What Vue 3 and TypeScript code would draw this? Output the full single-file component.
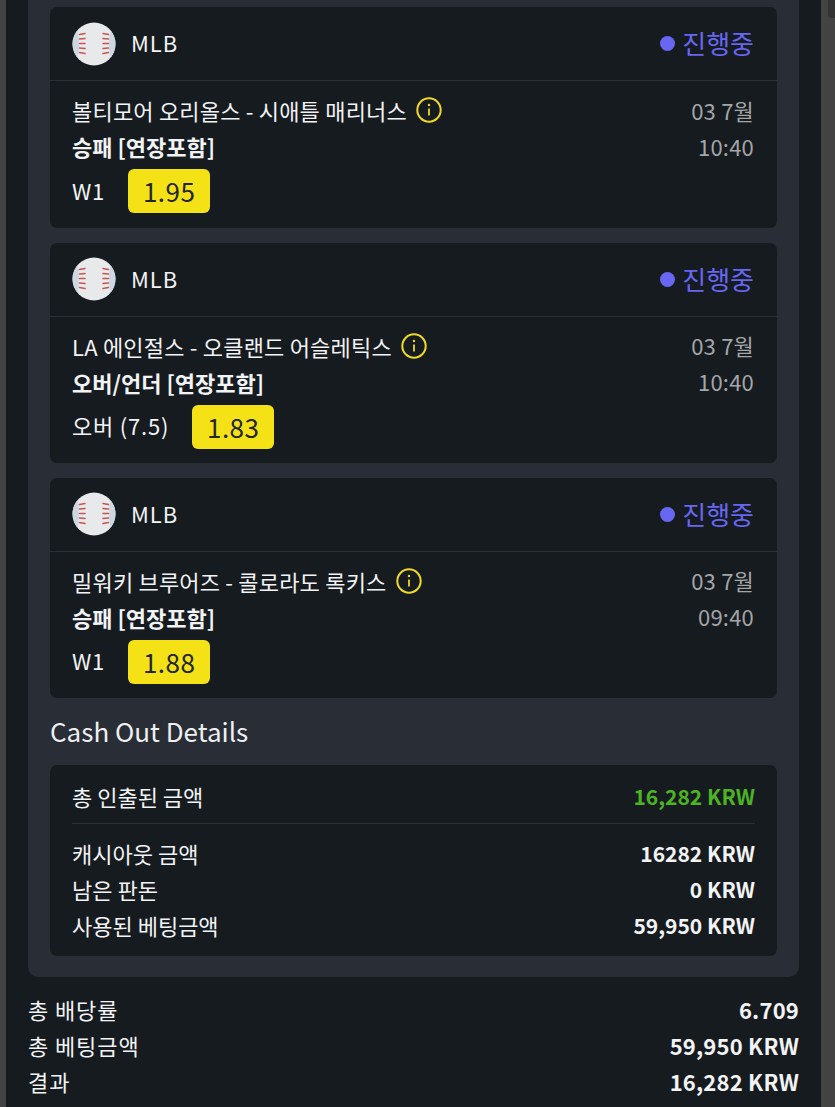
<script setup lang="ts">
interface Bet {
  match: string
  market: string
  pick: string
  odds: string
  date: string
  time: string
}

const bets: Bet[] = [
  { match: '볼티모어 오리올스 - 시애틀 매리너스', market: '승패 [연장포함]', pick: 'W1', odds: '1.95', date: '03 7월', time: '10:40' },
  { match: 'LA 에인절스 - 오클랜드 어슬레틱스', market: '오버/언더 [연장포함]', pick: '오버 (7.5)', odds: '1.83', date: '03 7월', time: '10:40' },
  { match: '밀워키 브루어즈 - 콜로라도 록키스', market: '승패 [연장포함]', pick: 'W1', odds: '1.88', date: '03 7월', time: '09:40' },
]

const cashRows = [
  { label: '캐시아웃 금액', value: '16282 KRW' },
  { label: '남은 판돈', value: '0 KRW' },
  { label: '사용된 베팅금액', value: '59,950 KRW' },
]

const totals = [
  { label: '총 배당률', value: '6.709' },
  { label: '총 베팅금액', value: '59,950 KRW' },
  { label: '결과', value: '16,282 KRW' },
]

const stitchYs = [0, 1, 2, 3, 4]
</script>

<template>
  <div class="page">
    <div class="sheet">
      <div class="panel">
        <div v-for="(bet, i) in bets" :key="i" class="card">
          <div class="card-head">
            <div class="league">
              <svg class="ball" viewBox="0 0 44 44">
                <defs>
                  <clipPath :id="`ball-${i}`"><circle cx="22" cy="22" r="21.500" /></clipPath>
                </defs>
                <g :clip-path="`url(#ball-${i})`">
                  <rect width="44" height="44" fill="#e8e9eb" />
                  <ellipse cx="0" cy="22" rx="7" ry="22" fill="#cdd7e1" />
                  <ellipse cx="44" cy="22" rx="7" ry="22" fill="#cdd7e1" />
                </g>
                <g stroke="#c8544e" stroke-width="1.500" stroke-linecap="round" fill="none">
                  <g v-for="n in stitchYs" :key="n">
                    <path :d="`M7.500 ${12.500 + n * 4.500}L13 ${11.500 + n * 5}`" />
                    <path :d="`M36.500 ${12.500 + n * 4.500}L31 ${11.500 + n * 5}`" />
                  </g>
                </g>
              </svg>
              <span class="league-name">MLB</span>
            </div>
            <div class="status"><i class="dot"></i>진행중</div>
          </div>
          <div class="card-body">
            <div class="info">
              <div class="match">
                <span>{{ bet.match }}</span>
                <svg class="info-icon" viewBox="0 0 26 26">
                  <circle cx="13" cy="13" r="11.700" fill="none" stroke="#eed925" stroke-width="2" />
                  <circle cx="13" cy="8" r="1.200" fill="#eed925" />
                  <path d="M13 11.500V18.500" stroke="#eed925" stroke-width="1.800" />
                </svg>
              </div>
              <div class="market">{{ bet.market }}</div>
              <div class="pick">
                <span class="pick-label">{{ bet.pick }}</span>
                <span class="odds">{{ bet.odds }}</span>
              </div>
            </div>
            <div class="when">
              <div>{{ bet.date }}</div>
              <div>{{ bet.time }}</div>
            </div>
          </div>
        </div>

        <h2 class="details-title">Cash Out Details</h2>
        <div class="details">
          <div class="row total-row">
            <span>총 인출된 금액</span>
            <b class="green">16,282 KRW</b>
          </div>
          <div class="cash-list">
            <div v-for="row in cashRows" :key="row.label" class="row">
              <span>{{ row.label }}</span>
              <b>{{ row.value }}</b>
            </div>
          </div>
        </div>
      </div>

      <div class="totals">
        <div v-for="row in totals" :key="row.label" class="row">
          <span>{{ row.label }}</span>
          <b>{{ row.value }}</b>
        </div>
      </div>
    </div>
    <i class="scroll-thumb"></i>
  </div>
</template>

<style scoped>
.page {
  position: relative;
  width: 835px;
  height: 1107px;
  overflow: hidden;
  box-sizing: border-box;
  padding: 0 14px 0 6px;
  background: #434343;
  font-family: "Noto Sans CJK KR", "Noto Sans", sans-serif;
  color: #f2f3f4;
}

.sheet {
  height: 100%;
  padding: 0 22px;
  background: #161b20;
}

.panel {
  padding: 7.300px 22px 21px;
  background: #292d35;
  border-radius: 0 0 10px 10px;
}

.card {
  margin-bottom: 15px;
  background: #161b20;
  border-radius: 7px;
}

.card-head {
  display: flex;
  align-items: center;
  justify-content: space-between;
  height: 73px;
  padding: 0 23px 0 22px;
  border-bottom: 1px solid #2a2e36;
}

.league {
  display: flex;
  align-items: center;
  gap: 15px;
}

.ball {
  width: 44px;
  height: 44px;
}

.league-name {
  margin-top: -3px;
  font-size: 22px;
  letter-spacing: 1px;
}

.status {
  display: flex;
  align-items: center;
  gap: 7px;
  margin-top: -2px;
  font-size: 26px;
  color: #6767f2;
}

.dot {
  width: 15px;
  height: 15px;
  margin-top: 2px;
  border-radius: 50%;
  background: #6767f2;
}

.card-body {
  display: flex;
  justify-content: space-between;
  height: 146.300px;
  padding: 11px 23px 0 22px;
  box-sizing: border-box;
}

.match {
  display: flex;
  align-items: center;
  gap: 9px;
  height: 36px;
  font-size: 22px;
  letter-spacing: 0.200px;
}

.info-icon {
  width: 26px;
  height: 26px;
}

.market {
  height: 36px;
  line-height: 36px;
  font-size: 22px;
  font-weight: 700;
}

.pick {
  display: flex;
  align-items: center;
  gap: 23px;
  margin-top: 5px;
  font-size: 22px;
  letter-spacing: 0.800px;
}

.pick-label {
  margin-top: -3px;
}

.odds {
  width: 82px;
  height: 44px;
  line-height: 43px;
  text-align: center;
  font-size: 26px;
  letter-spacing: 0.500px;
  color: #22252a;
  background: #f5e216;
  border-radius: 6px;
}

.when {
  margin-top: -0.500px;
  text-align: right;
  font-size: 22px;
  letter-spacing: 0.200px;
  line-height: 36px;
  color: #a4a6a8;
}

.details-title {
  margin: 0;
  height: 52px;
  line-height: 36px;
  font-size: 26px;
  font-weight: 400;
  color: #eef0f2;
}

.details {
  padding: 0 22px;
  background: #161b20;
  border-radius: 7px;
}

.row {
  display: flex;
  justify-content: space-between;
  align-items: center;
  height: 36px;
  font-size: 22px;
}

.row b {
  font-weight: 700;
  font-size: 21px;
}

.total-row {
  height: 59px;
  padding-top: 4px;
  border-bottom: 1px solid #2a2e36;
  box-sizing: border-box;
}

.green {
  color: #4cb324;
}

.cash-list {
  padding: 11px 0 13px;
}

.totals {
  padding-top: 14px;
  letter-spacing: 0.900px;
}

.totals .row b {
  font-size: 22px;
  letter-spacing: 0.200px;
}

.scroll-thumb {
  position: absolute;
  top: 0;
  right: 0;
  width: 7px;
  height: 18px;
  background: #333;
  border-radius: 0 0 0 4px;
}
</style>

<style>
body {
  margin: 0;
}
</style>
